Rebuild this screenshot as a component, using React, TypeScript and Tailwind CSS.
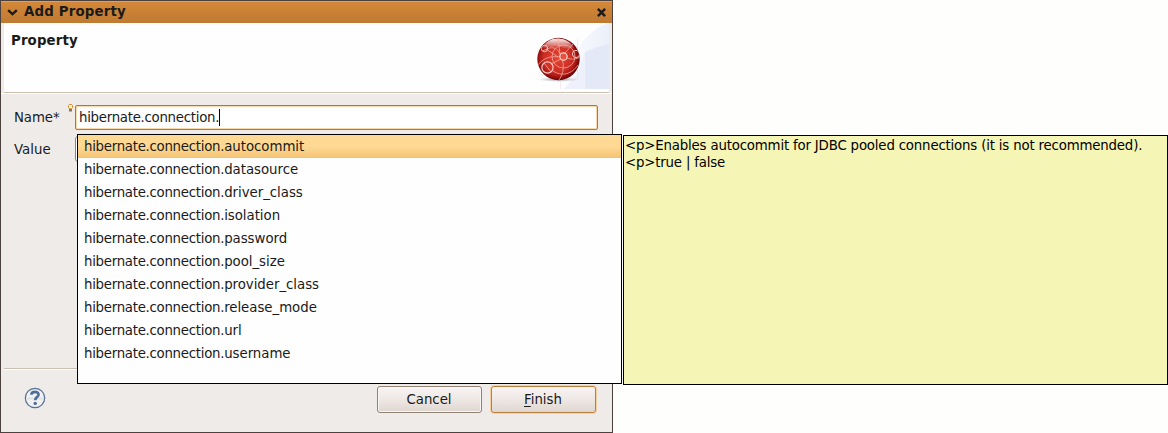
const suggestions = [
  "autocommit",
  "datasource",
  "driver_class",
  "isolation",
  "password",
  "pool_size",
  "provider_class",
  "release_mode",
  "url",
  "username",
];

function ChevronIcon() {
  return (
    <svg className="h-[7px] w-[11px]" viewBox="0 0 11 7">
      <path d="M1.2 1.2L5.5 5.2L9.8 1.2" fill="none" stroke="#1d1a17" strokeWidth="2.4" />
    </svg>
  );
}

function CloseIcon() {
  return (
    <svg className="h-[9px] w-[9px]" viewBox="0 0 9 9">
      <path d="M0.9 0.9L8.1 8.1M8.1 0.9L0.9 8.1" fill="none" stroke="#1d1a17" strokeWidth="2.5" />
    </svg>
  );
}

function Banner() {
  return (
    <svg className="h-[66px] w-[80px]" viewBox="0 0 80 66">
      <defs>
        <radialGradient id="ball" cx="0.48" cy="0.48" r="0.52">
          <stop offset="0" stopColor="#e5432f" />
          <stop offset="0.6" stopColor="#cf3025" />
          <stop offset="0.84" stopColor="#a81614" />
          <stop offset="1" stopColor="#690000" />
        </radialGradient>
        <linearGradient id="gloss" x1="0" y1="0" x2="0" y2="1">
          <stop offset="0" stopColor="#fff" stopOpacity="0.95" />
          <stop offset="1" stopColor="#fff" stopOpacity="0.08" />
        </linearGradient>
        <radialGradient id="shade">
          <stop offset="0" stopColor="#777b88" stopOpacity="0.8" />
          <stop offset="1" stopColor="#a0a4b0" stopOpacity="0" />
        </radialGradient>
        <linearGradient id="sky" x1="0" y1="0" x2="1" y2="0">
          <stop offset="0" stopColor="#fdfeff" />
          <stop offset="1" stopColor="#ecf0fa" />
        </linearGradient>
        <clipPath id="clip">
          <circle cx="29.5" cy="36" r="21" />
        </clipPath>
      </defs>
      <path d="M80 0C61 6 51 19 46 34L30 66H80Z" fill="url(#sky)" />
      <path d="M80 21C67 24 60 27 56 29V66H80Z" fill="#e4e9f8" />
      <path d="M35 66L49 50L56 29V66Z" fill="#eef1fb" />
      <path d="M48.500 16V55M31.500 50V66" stroke="#eedfe8" strokeWidth="0.7" />
      <ellipse cx="29.500" cy="56.500" rx="21" ry="2.400" fill="url(#shade)" />
      <circle cx="29.500" cy="36" r="21.200" fill="url(#ball)" />
      <g clipPath="url(#clip)">
        <path d="M14 25C18 13 38 12 45 25C41 24 39 27 35 25C29 22 21 24 14 25Z" fill="url(#gloss)" />
        <g fill="none" stroke="#f0aca2" strokeWidth="0.8">
          <circle cx="34.500" cy="33.500" r="11.500" />
          <path d="M14 28C23 22 29 25 31 31C36 40 35 50 30 57" />
          <path d="M17 26L29 34M38 35C43 37 48 36 51 34M31 31L29 15M36 30L45 20" />
          <path d="M9 42C15 34 23 33 31 34M22 41L32 36M15 40L22 49" />
          <path d="M24 48C33 54 43 51 49 42" />
        </g>
        <g fill="none" stroke="#f8c9c1">
          <circle cx="18.500" cy="44.500" r="5.600" strokeWidth="1.200" />
          <circle cx="15.500" cy="25.500" r="3.200" />
          <circle cx="47" cy="31" r="3.600" />
        </g>
        <circle cx="34.500" cy="33.500" r="3.700" fill="#e9503e" stroke="#fbd5cf" strokeWidth="1.200" />
      </g>
    </svg>
  );
}

function Bulb() {
  return (
    <svg className="h-2 w-[5px]" viewBox="0 0 5 8">
      <path d="M1.400 0.500H3.600L4.500 1.400V3.500L3.500 4.700H1.500L0.500 3.500V1.400Z" fill="#fff3cd" stroke="#d98a1c" />
      <path d="M1 5H4V7.500H1Z" fill="#857763" />
    </svg>
  );
}

function HelpIcon() {
  return (
    <svg className="h-[22px] w-[22px]" viewBox="0 0 22 22">
      <circle cx="11" cy="11" r="9.700" fill="#f2f1f2" stroke="#557096" strokeWidth="1.200" />
      <path d="M2 11.500H20" stroke="#dfe2e5" strokeWidth="2" />
      <path d="M7.300 7.700C7.500 3.900 14.800 4 14.600 7.700C14.500 10 11.200 9.900 11.200 13.300" fill="none" stroke="#506c98" strokeWidth="2.600" />
      <circle cx="11.200" cy="16.400" r="1.700" fill="#506c98" />
    </svg>
  );
}

export default function App() {
  return (
    <div className="relative h-[433px] w-[1168px] overflow-hidden bg-[#fefefc] font-['DejaVu_Sans',sans-serif] text-[13.333px] text-[#1a1a1a]">
      <main className="flex h-[433px] w-[613px] flex-col border border-[#4b423f] bg-[#efebe9]">
        <header className="flex h-[22px] shrink-0 items-center border-t border-[#dfa162] bg-linear-to-b from-[#d48738] to-[#bf7a32] px-[6px] font-bold">
          <ChevronIcon />
          <h1 className="ml-[6px] flex-1 pb-px leading-[20px] tracking-[0.17px]">Add Property</h1>
          <CloseIcon />
        </header>

        <section className="mx-[3px] flex h-[70px] shrink-0 justify-between border-b border-[#cabfb1] bg-[#fefefe]">
          <h2 className="pt-[10px] pl-[7px] leading-4 font-bold tracking-[0.13px]">Property</h2>
          <Banner />
        </section>

        <form className="flex h-[275px] shrink-0 flex-col gap-[6px] border-t border-white pt-[10px]">
          <div className="flex h-[26px] items-start">
            <label className="w-[53px] pt-[6px] pl-[13px] leading-4 tracking-[-0.1px]">Name*</label>
            <div className="w-[21px] pl-[14px]">
              <Bulb />
            </div>
            <div className="mt-px flex h-[25px] w-[523px] items-center rounded-[2px] border border-[#b97531] bg-white pl-[3px] shadow-[inset_0_0_0_1px_#f8d9ac]">
              <span className="pt-px leading-4 tracking-[-0.28px]">hibernate.connection.</span>
              <span className="h-[17px] w-px bg-black" />
            </div>
          </div>
          <div className="flex h-[26px] items-center">
            <label className="w-[74px] pt-px pl-[13px] leading-4">Value</label>
            <div className="h-[26px] w-[523px] rounded-[3px] border border-[#8f8278] bg-white" />
          </div>
        </form>

        <footer className="flex flex-1 flex-col">
          <div className="mx-[3px] h-[2px] shrink-0 border-t border-[#cac0af] bg-white" />
          <div className="flex items-start pt-[16px] pr-[15px] pl-[23px]">
            <div className="pt-px">
              <HelpIcon />
            </div>
            <div className="ml-auto flex gap-[9px]">
              <button className="h-[27px] w-[105px] rounded-[3px] border border-[#8f8274] bg-linear-to-b from-[#f8f4f3] via-[#eee8e5] to-[#ded5cf] pr-px leading-4 shadow-[inset_0_0_0_1px_#faf6f4]">Cancel</button>
              <button className="mr-px h-[27px] w-[105px] rounded-[3px] border border-[#b9803d] bg-linear-to-b from-[#f8f4f3] via-[#eee8e5] to-[#ded5cf] pr-px leading-4 shadow-[0_0_0_1px_#f5d0a0]"><span className="underline underline-offset-2">F</span>inish</button>
            </div>
          </div>
        </footer>
      </main>

      <ul className="absolute top-[134px] left-[77px] h-[250px] w-[545px] border border-black bg-[#fefefe]">
        {suggestions.map((name, index) => (
          <li key={name} className={index === 0 ? "flex h-[23px] items-center bg-linear-to-b from-[#fed994] from-50% to-[#f4c373] pl-[6px] leading-4" : "flex h-[23px] items-center pl-[6px] leading-4"}>
            <span className="tracking-[-0.28px]">hibernate.connection.</span>
            <span className="tracking-[-0.03px]">{name}</span>
          </li>
        ))}
      </ul>

      <aside className="absolute top-[135px] left-[623px] h-[250px] w-[545px] border border-black bg-[#f5f5b5] pt-[1px] pl-px leading-[17px] tracking-[-0.18px] whitespace-nowrap text-black">
        <p>{"<p>Enables autocommit for JDBC pooled connections (it is not recommended)."}</p>
        <p>{"<p>true | false"}</p>
      </aside>
    </div>
  );
}
